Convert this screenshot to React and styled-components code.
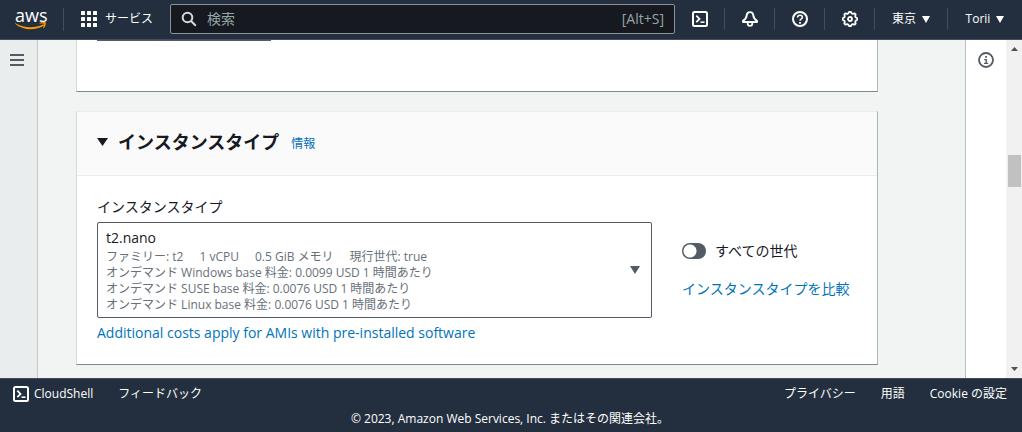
import React from "react";
import styled, { createGlobalStyle } from "styled-components";

const navy = "#232f3e";
const ink = "#16191f";
const slate = "#545b64";
const blue = "#0073bb";

const GlobalStyle = createGlobalStyle`
  *, *::before, *::after { box-sizing: border-box; }
  body {
    margin: 0;
    background: #f2f3f3;
    color: ${ink};
    font-family: "Open Sans", "Noto Sans CJK JP", sans-serif;
    font-size: 14px;
    line-height: 20px;
  }
  button, input, select { font: inherit; color: inherit; }
  button { margin: 0; padding: 0; border: 0; background: none; cursor: pointer; }
`;

const Page = styled.div`
  display: flex;
  flex-direction: column;
  min-height: 100vh;
`;

/* Top navigation */

const TopBar = styled.header`
  display: flex;
  align-items: center;
  height: 40px;
  padding-bottom: 1px;
  background: ${navy};
  border-bottom: 1px solid #414d5c;
  color: #fff;
`;

const LogoLink = styled.a`
  display: flex;
  flex-direction: column;
  align-items: flex-start;
  width: 64px;
  padding-left: 15px;
  border-right: 1px solid #414d5c;
  color: #fff;
  font-size: 18px;
  line-height: 14px;
  text-decoration: none;
`;

const ServicesButton = styled.button`
  display: flex;
  align-items: center;
  gap: 8px;
  padding: 0 17px;
  font-size: 12px;
`;

const SearchBox = styled.label`
  display: flex;
  flex: 1;
  align-items: center;
  gap: 10px;
  min-width: 0;
  height: 30px;
  padding: 0 10px;
  border: 1px solid #879596;
  border-radius: 2px;
  background: ${ink};
  color: #d5dbdb;
`;

const SearchInput = styled.input`
  flex: 1;
  min-width: 0;
  padding: 0;
  border: 0;
  outline: 0;
  background: none;
  &::placeholder { color: #95a5a6; opacity: 1; }
`;

const Shortcut = styled.span`
  color: #95a5a6;
`;

const NavButton = styled.button`
  display: flex;
  align-items: center;
  justify-content: center;
  gap: 6px;
  width: ${(p) => p.$width || 50}px;
  height: 22px;
  border-right: ${(p) => (p.$last ? "0" : "1px solid #414d5c")};
  font-size: 12px;
`;

/* Page body */

const Body = styled.div`
  display: flex;
  flex: 1;
`;

const SideRail = styled.nav`
  width: 38px;
  padding: 12px 0 0 9px;
  background: #eaeded;
  border-right: 1px solid #c3cacc;
`;

const InfoRail = styled.aside`
  width: 41px;
  padding: 12px 0 0 12px;
  background: #fff;
  border-left: 1px solid #b8c0c3;
`;

const RailButton = styled.button`
  display: block;
  width: 16px;
  height: 16px;
  color: ${slate};
`;

const ScrollTrack = styled.div`
  display: flex;
  flex-direction: column;
  align-items: center;
  width: 16px;
  padding: 7px 0;
  background: #f1f1f1;
  color: #505050;
`;

const ScrollThumb = styled.div`
  width: 13px;
  height: 32px;
  margin: 104px 0 auto;
  background: #c1c1c1;
`;

const Content = styled.main`
  display: flex;
  flex: 1;
  flex-direction: column;
  gap: 19px;
  min-width: 0;
  padding: 0 87px 12px 38px;
`;

const Card = styled.section`
  background: #fff;
  border: 1px solid #d5dbdb;
  border-top-color: #eaeded;
  border-right-color: #aab7b8;
  border-bottom-color: #80888f;
`;

const ScrolledCard = styled(Card)`
  height: 52px;
  padding: 0 20px;
  border-top: 0;
`;

const FieldEdge = styled.div`
  width: 174px;
  height: 1px;
  background: ${slate};
`;

const CardHeader = styled.header`
  display: flex;
  align-items: center;
  gap: 12px;
  padding: 18px 20px 21px;
  background: #fafafa;
  border-bottom: 1px solid #eaeded;
`;

const TitleButton = styled.button`
  display: flex;
  align-items: center;
  gap: 10px;
`;

const Title = styled.h2`
  margin: 0;
  font-size: 18px;
  font-weight: 700;
  line-height: 22px;
`;

const TextLink = styled.a`
  color: ${blue};
  font-size: ${(p) => (p.$small ? 12 : 14)}px;
  text-decoration: none;
  &:hover { text-decoration: underline; }
`;

const InfoLink = styled(TextLink)`
  padding-top: 4px;
`;

const CardBody = styled.div`
  display: grid;
  grid-template-columns: minmax(0, 1fr) 175px;
  column-gap: 30px;
  padding: 21px 20px;
`;

const Field = styled.div`
  display: flex;
  flex-direction: column;
  align-items: stretch;
  gap: 5px;
`;

const SelectFrame = styled.div`
  display: grid;
  align-items: center;
  border: 1px solid ${slate};
  border-radius: 2px;
  background: #fff;
`;

const TypeSelect = styled.select`
  grid-area: 1 / 1;
  align-self: stretch;
  width: 100%;
  padding: 4px 40px 68px 8px;
  border: 0;
  background: none;
  appearance: none;
`;

const SelectDetails = styled.div`
  grid-area: 1 / 1;
  padding: 26px 40px 4px 8px;
  color: #687078;
  font-size: 12px;
  line-height: 16px;
  pointer-events: none;
`;

const DetailRow = styled.div`
  display: flex;
  gap: 16px;
`;

const SelectCaret = styled.span`
  display: flex;
  grid-area: 1 / 1;
  justify-self: end;
  margin-right: 11px;
  color: ${slate};
  pointer-events: none;
`;

const Options = styled.div`
  display: flex;
  flex-direction: column;
  gap: 18px;
  padding-top: 44px;
`;

const ToggleLabel = styled.label`
  display: flex;
  align-items: center;
  gap: 9px;
`;

const Toggle = styled.input`
  width: 24px;
  height: 16px;
  margin: 0;
  border-radius: 8px;
  background: radial-gradient(circle at 8px 8px, #fff 6px, ${slate} 7px);
  appearance: none;
  &:checked { background: radial-gradient(circle at 16px 8px, #fff 6px, ${blue} 7px); }
`;

/* Footer */

const Footer = styled.footer`
  padding: 5px 15px 3px 13px;
  background: ${navy};
  border-top: 1px solid #414d5c;
  color: #fff;
  font-size: 12px;
`;

const FooterRow = styled.div`
  display: flex;
  align-items: center;
  gap: 25px;
`;

const FooterLink = styled.a`
  color: #fff;
  text-decoration: none;
`;

const ShellButton = styled.button`
  display: flex;
  align-items: center;
  gap: 5px;
`;

const Spacer = styled.span`
  flex: 1;
`;

const Copyright = styled.p`
  margin: 5px 0 0;
  text-align: center;
`;

/* Drawings */

const Svg = ({ size = 16, children }) => (
  <svg width={size} height={size} viewBox="0 0 16 16" fill="none" stroke="currentColor" strokeWidth="2" aria-hidden="true">
    {children}
  </svg>
);

const Caret = ({ width = 10, height = 8 }) => (
  <svg width={width} height={height} viewBox="0 0 10 8" preserveAspectRatio="none" aria-hidden="true">
    <path d="M0 0h10L5 8z" fill="currentColor" />
  </svg>
);

const ScrollArrow = ({ down }) => (
  <svg width="7" height="4" viewBox="0 0 7 4" aria-hidden="true">
    <path d={down ? "M0 0h7L3.500 4z" : "M0 4h7L3.500 0z"} fill="currentColor" />
  </svg>
);

const Smile = () => (
  <svg width="32" height="9" viewBox="0 0 32 9" aria-hidden="true">
    <path d="M.4 1.200C8.500 6 19.500 6.500 28 2.600c1-.4 1.900.6.9 1.200C20 8.900 7.500 8.500.1 1.800c-.3-.4 0-.8.3-.6z" fill="#f90" />
    <path d="M24.500.9c2.200-1.100 5.500-1.100 6.100-.4.6.9-.2 4-2 5.600-.3.3-.6.1-.5-.2.500-1.200 1.400-3.500.9-4.100-.5-.6-3.100-.4-4.300-.3-.4 0-.6-.3-.2-.6z" fill="#f90" />
  </svg>
);

const ShellIcon = () => (
  <Svg>
    <rect x="1" y="1" width="14" height="14" rx="1.500" />
    <path d="M4.300 4.600 7.500 7.900 4.300 11.200" strokeWidth="1.800" />
    <path d="M8.500 11.200h4" strokeWidth="1.600" />
  </Svg>
);

const GridIcon = () => (
  <svg width="16" height="16" viewBox="0 0 16 16" fill="currentColor" aria-hidden="true">
    {[0, 6, 12].map((y) =>
      [0, 6, 12].map((x) => <rect key={`${x}-${y}`} x={x} y={y} width="4" height="4" rx=".5" />)
    )}
  </svg>
);

const SearchIcon = () => (
  <Svg>
    <circle cx="6.500" cy="6.500" r="4.800" />
    <path d="m10 10 4.800 4.800" />
  </Svg>
);

const BellIcon = () => (
  <Svg>
    <path d="M8 1.100C6 1.100 4.900 2.400 4.700 4.300 4.400 7 3.400 8.400 1 9.800V11h14V9.800C12.600 8.400 11.600 7 11.300 4.300 11.100 2.400 10 1.100 8 1.100z" strokeLinejoin="round" strokeWidth="1.900" />
    <path d="M5.700 11.500v1c0 3.200 4.600 3.200 4.600 0v-1" strokeWidth="1.800" />
  </Svg>
);

const HelpIcon = () => (
  <Svg>
    <circle cx="8" cy="8" r="7" />
    <path d="M5.600 6.400C5.600 3.500 10.400 3.500 10.400 6.200 10.400 7.800 8 7.800 8 9.800" strokeWidth="1.600" />
    <path d="M8 10.900v1.800" strokeWidth="1.800" />
  </Svg>
);

const gearPath = Array.from({ length: 32 }, (_, i) => {
  const angle = ((i - 0.5) * Math.PI) / 16;
  const radius = i % 4 < 2 ? 7.3 : 5.9;
  const x = (8 + radius * Math.sin(angle)).toFixed(2);
  const y = (8 - radius * Math.cos(angle)).toFixed(2);
  return `${i ? "L" : "M"}${x} ${y}`;
}).join("");

const GearIcon = () => (
  <Svg>
    <path d={`${gearPath}z`} strokeLinejoin="round" strokeWidth="1.800" />
    <circle cx="8" cy="8" r="2" strokeWidth="1.800" />
  </Svg>
);

const MenuIcon = () => (
  <Svg>
    <path d="M1 3h14M1 8h14M1 13h14" />
  </Svg>
);

const InfoIcon = () => (
  <Svg>
    <circle cx="8" cy="8" r="7" strokeWidth="1.800" />
    <path d="M8 4v1.800" strokeWidth="1.800" />
    <path d="M6.200 7.600h2v3.700M6 11.400h4.200" strokeWidth="1.400" />
  </Svg>
);

export default function App() {
  return (
    <>
      <GlobalStyle />
      <Page>
        <TopBar>
          <LogoLink href="#home">
            aws
            <Smile />
          </LogoLink>
          <ServicesButton type="button">
            <GridIcon />
            サービス
          </ServicesButton>
          <SearchBox>
            <SearchIcon />
            <SearchInput type="text" placeholder="検索" aria-label="検索" />
            <Shortcut>[Alt+S]</Shortcut>
          </SearchBox>
          <NavButton type="button" aria-label="CloudShell"><ShellIcon /></NavButton>
          <NavButton type="button" aria-label="通知"><BellIcon /></NavButton>
          <NavButton type="button" aria-label="ヘルプ"><HelpIcon /></NavButton>
          <NavButton type="button" aria-label="設定"><GearIcon /></NavButton>
          <NavButton type="button" $width={73}>東京<Caret width={8} height={7} /></NavButton>
          <NavButton type="button" $width={74} $last>Torii<Caret width={8} height={7} /></NavButton>
        </TopBar>

        <Body>
          <SideRail>
            <RailButton type="button" aria-label="メニュー"><MenuIcon /></RailButton>
          </SideRail>

          <Content>
            <ScrolledCard>
              <FieldEdge />
            </ScrolledCard>

            <Card>
              <CardHeader>
                <TitleButton type="button" aria-expanded="true">
                  <Caret width={11} height={8} />
                  <Title>インスタンスタイプ</Title>
                </TitleButton>
                <InfoLink href="#info" $small>情報</InfoLink>
              </CardHeader>
              <CardBody>
                <Field>
                  <label htmlFor="instance-type">インスタンスタイプ</label>
                  <SelectFrame>
                    <TypeSelect id="instance-type" defaultValue="t2.nano">
                      <option value="t2.nano">t2.nano</option>
                    </TypeSelect>
                    <SelectDetails>
                      <DetailRow>
                        <span>ファミリー: t2</span>
                        <span>1 vCPU</span>
                        <span>0.5 GiB メモリ</span>
                        <span>現行世代: true</span>
                      </DetailRow>
                      <DetailRow>オンデマンド Windows base 料金: 0.0099 USD 1 時間あたり</DetailRow>
                      <DetailRow>オンデマンド SUSE base 料金: 0.0076 USD 1 時間あたり</DetailRow>
                      <DetailRow>オンデマンド Linux base 料金: 0.0076 USD 1 時間あたり</DetailRow>
                    </SelectDetails>
                    <SelectCaret><Caret /></SelectCaret>
                  </SelectFrame>
                  <TextLink href="#costs">Additional costs apply for AMIs with pre-installed software</TextLink>
                </Field>
                <Options>
                  <ToggleLabel>
                    <Toggle type="checkbox" role="switch" />
                    すべての世代
                  </ToggleLabel>
                  <TextLink href="#compare">インスタンスタイプを比較</TextLink>
                </Options>
              </CardBody>
            </Card>
          </Content>

          <InfoRail>
            <RailButton type="button" aria-label="情報パネル"><InfoIcon /></RailButton>
          </InfoRail>
          <ScrollTrack>
            <ScrollArrow />
            <ScrollThumb />
            <ScrollArrow down />
          </ScrollTrack>
        </Body>

        <Footer>
          <FooterRow>
            <ShellButton type="button"><ShellIcon />CloudShell</ShellButton>
            <FooterLink href="#feedback">フィードバック</FooterLink>
            <Spacer />
            <FooterLink href="#privacy">プライバシー</FooterLink>
            <FooterLink href="#terms">用語</FooterLink>
            <FooterLink href="#cookies">Cookie の設定</FooterLink>
          </FooterRow>
          <Copyright>© 2023, Amazon Web Services, Inc. またはその関連会社。</Copyright>
        </Footer>
      </Page>
    </>
  );
}
